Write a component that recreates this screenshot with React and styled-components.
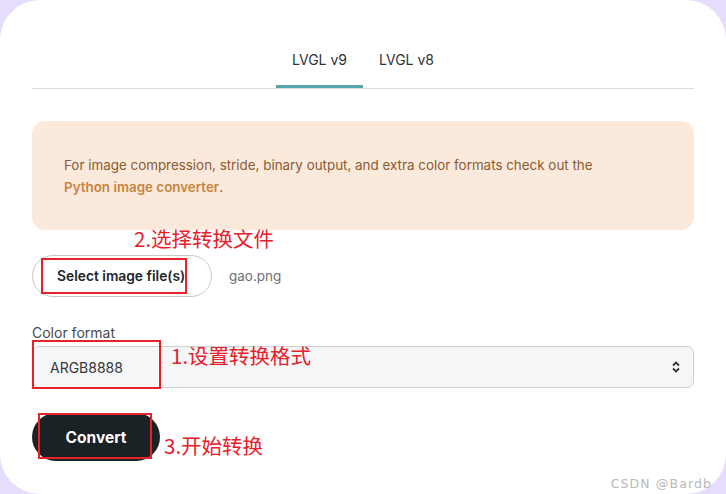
import React from "react";
import styled, { createGlobalStyle } from "styled-components";

const GlobalStyle = createGlobalStyle`
  html, body {
    margin: 0;
    padding: 0;
    background: #e6dcfb;
  }
  body {
    font-family: Inter, "Noto Sans", sans-serif;
  }
  * { box-sizing: border-box; }
`;

const App = () => {
  const [tab, setTab] = React.useState("v9");

  return (
    <>
      <GlobalStyle />
      <Card>
        <Tabs>
          {["v9", "v8"].map((v) => (
            <TabButton key={v} $active={tab === v} onClick={() => setTab(v)}>
              LVGL {v}
            </TabButton>
          ))}
        </Tabs>

        <Alert>
          For image compression, stride, binary output, and extra color formats check out the
          <br />
          <AlertLink>Python image converter</AlertLink>.
        </Alert>

        <FileRow>
          <FileNote>2.选择转换文件</FileNote>
          <FileButton>
            Select image file(s)
            <FileMark />
          </FileButton>
          <FileName>gao.png</FileName>
        </FileRow>

        <Label>Color format</Label>
        <SelectBox>
          ARGB8888
          <Arrows viewBox="0 0 10 14" width="10" height="14">
            <path d="M2 5.5 L5 2.5 L8 5.5" fill="none" stroke="#333" strokeWidth="1.8" />
            <path d="M2 8.5 L5 11.5 L8 8.5" fill="none" stroke="#333" strokeWidth="1.8" />
          </Arrows>
          <SelectMark />
          <SelectNote>1.设置转换格式</SelectNote>
        </SelectBox>

        <ConvertRow>
          <ConvertButton>
            Convert
            <ConvertMark />
          </ConvertButton>
          <ConvertNote>3.开始转换</ConvertNote>
        </ConvertRow>

        <Watermark>CSDN @Bardb</Watermark>
      </Card>
    </>
  );
};

export default App;

/**
 * Styles
 */

const Card = styled.div`
  position: relative;
  width: 726px;
  height: 494px;
  background: #fff;
  border-radius: 40px;
  padding: 38px 32px 0 32px;
  display: flex;
  flex-direction: column;
`;

const Tabs = styled.div`
  display: flex;
  justify-content: center;
  border-bottom: 1px solid #dedede;
`;

const TabButton = styled.button`
  border: 0;
  background: transparent;
  padding: 12px 16px 15px;
  font-family: Inter, sans-serif;
  font-size: 14px;
  line-height: 20px;
  color: #2f3336;
  cursor: pointer;
  border-bottom: 3px solid ${({ $active }) => ($active ? "#57a4ac" : "transparent")};
`;

const Alert = styled.div`
  margin-top: 32px;
  background: #fbeadc;
  border-radius: 13px;
  padding: 33px 32px 32px;
  font-size: 13.4px;
  line-height: 22px;
  color: #8a5b33;
`;

const AlertLink = styled.a`
  color: #c8843f;
  font-weight: 600;
`;

const FileRow = styled.div`
  position: relative;
  margin-top: 25px;
  display: flex;
  align-items: center;
  gap: 17px;
`;

const FileButton = styled.button`
  position: relative;
  width: 180px;
  height: 42px;
  border-radius: 21px;
  border: 1px solid #c9c9c9;
  background: #fff;
  padding: 0 0 0 24px;
  text-align: left;
  font-family: Inter, sans-serif;
  font-size: 13.8px;
  font-weight: 600;
  color: #22262a;
`;

const FileName = styled.span`
  font-size: 13.5px;
  color: #6a7077;
`;

const Label = styled.div`
  margin-top: 27px;
  font-size: 14px;
  line-height: 17px;
  color: #474b50;
`;

const SelectBox = styled.div`
  position: relative;
  margin-top: 5px;
  height: 42px;
  border: 1px solid #cfcfcf;
  border-radius: 7px;
  background: #f5f6f8;
  display: flex;
  align-items: center;
  padding: 0 12px 0 17px;
  font-size: 14px;
  color: #33373b;
`;

const Arrows = styled.svg`
  margin-left: auto;
`;

const ConvertRow = styled.div`
  position: relative;
  margin-top: 25px;
  display: flex;
`;

const ConvertButton = styled.button`
  position: relative;
  width: 128px;
  height: 48px;
  border: 0;
  border-radius: 24px;
  background: #1b2226;
  color: #fff;
  font-family: Inter, sans-serif;
  font-size: 15.5px;
  font-weight: 700;
`;

/* red annotation boxes drawn over the controls */
const Mark = styled.span`
  position: absolute;
  border: 2px solid #e8202a;
  pointer-events: none;
`;

const FileMark = styled(Mark)`
  top: 2px;
  left: 8px;
  width: 146px;
  height: 36px;
`;

const SelectMark = styled(Mark)`
  top: -7px;
  left: -1px;
  width: 129px;
  height: 49px;
`;

const ConvertMark = styled(Mark)`
  top: 0;
  left: 6px;
  width: 114px;
  height: 46px;
`;

/* red annotation labels */
const Note = styled.span`
  position: absolute;
  font-family: "Noto Sans CJK SC", sans-serif;
  font-size: 20.5px;
  line-height: 26px;
  color: #e8202a;
  white-space: nowrap;
`;

const FileNote = styled(Note)`
  top: -30px;
  left: 102px;
`;

const SelectNote = styled(Note)`
  top: -5px;
  left: 138px;
`;

const ConvertNote = styled(Note)`
  top: 19px;
  left: 132px;
`;

const Watermark = styled.span`
  position: absolute;
  right: 14px;
  bottom: 3px;
  font-family: "DejaVu Sans", sans-serif;
  font-size: 12.5px;
  letter-spacing: 1.1px;
  color: #b8b8b8;
`;
